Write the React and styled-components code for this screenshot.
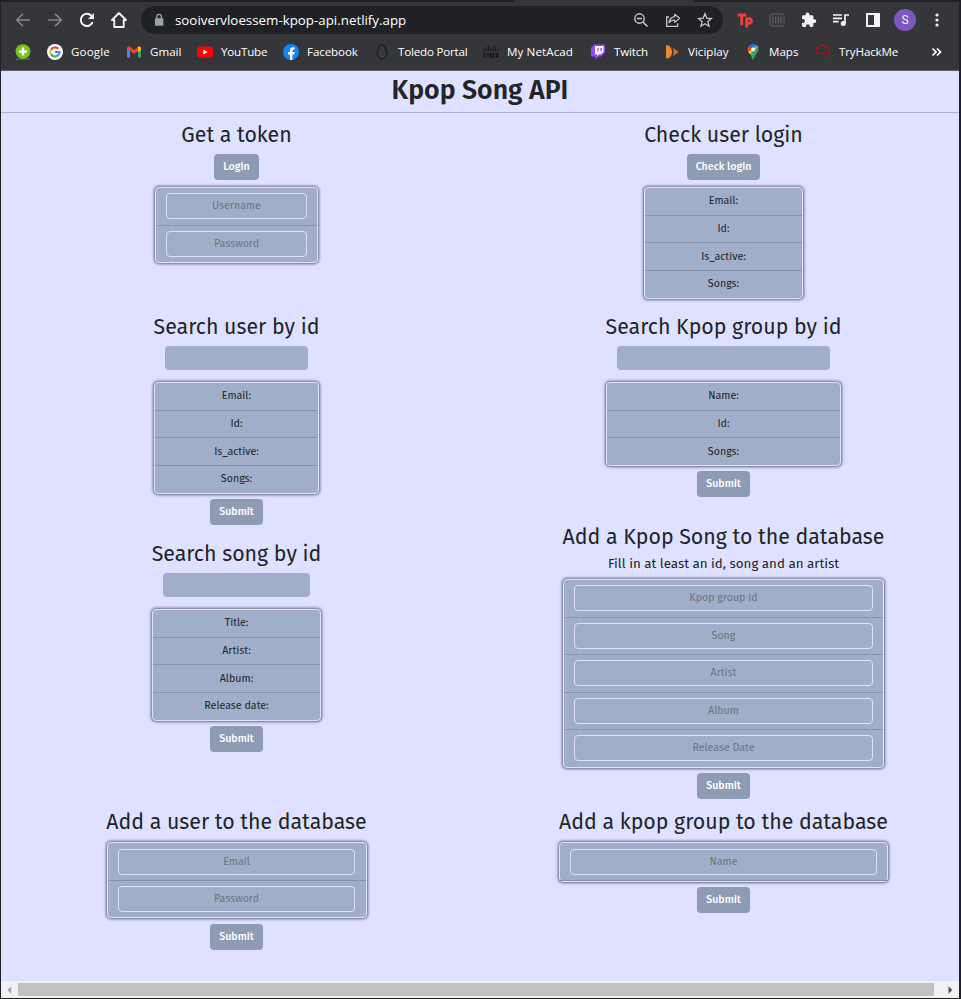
import React from "react";
import styled, { createGlobalStyle } from "styled-components";

const Global = createGlobalStyle`
  *, *::before, *::after { box-sizing: border-box; }
  body { margin: 0; background: #1f1d24; }
  button, input { font: inherit; }
`;

const Window = styled.div`
  width: 961px;
  height: 999px;
  padding: 0 2px 1px 1px;
  display: flex;
  flex-direction: column;
  overflow: hidden;
  background: #211f28;
`;

/* Browser chrome */
const Chrome = styled.header`
  flex: none;
  height: 71px;
  background: #35363a;
  border-bottom: 1px solid #5c5d61;
  font-family: "Open Sans", "Noto Sans", sans-serif;
  color: #fff;
`;

const TabStrip = styled.div`
  display: flex;
  justify-content: space-between;
  height: 2px;
`;

const TabEdge = styled.div`
  width: ${(p) => p.$width}px;
  background: #202124;
  border-radius: ${(p) => (p.$right ? "0 0 0 2px" : "0 0 2px 0")};
`;

const Toolbar = styled.div`
  display: flex;
  align-items: center;
  height: 36px;
`;

const Slot = styled.span`
  flex: none;
  display: flex;
  align-items: center;
  justify-content: center;
  width: ${(p) => p.$width || 32}px;
  color: ${(p) => p.$color || "#f1f3f4"};
`;

const NavGroup = styled.nav`
  display: flex;
  width: 140px;
  padding-left: 6px;
`;

const AddressBar = styled.div`
  display: flex;
  align-items: center;
  width: 582px;
  height: 28px;
  padding: 0 2px 0 8px;
  border-radius: 14px;
  background: #202124;
`;

const Url = styled.span`
  flex: 1;
  font-size: 13.33px;
  line-height: 20px;
  white-space: nowrap;
`;

const Extensions = styled.div`
  display: flex;
  align-items: center;
  padding-left: 6px;
`;

const Avatar = styled.span`
  display: flex;
  align-items: center;
  justify-content: center;
  width: 22px;
  height: 22px;
  border-radius: 50%;
  background: #7e57c2;
  font: 12px Roboto, sans-serif;
`;

const Bookmarks = styled.nav`
  display: flex;
  align-items: center;
  height: 28px;
  padding-left: 14px;
  font-size: 11.6px;
`;

const Bookmark = styled.a`
  flex: none;
  display: flex;
  align-items: center;
  gap: 8px;
  width: ${(p) => p.$width}px;
  white-space: nowrap;
  letter-spacing: ${(p) => p.$spacing || 0}px;

  svg { flex: none; }
`;

const BookmarkLabel = styled.span`
  padding-bottom: 2px;
`;

/* Page */
const Page = styled.main`
  flex: 1;
  min-height: 0;
  overflow: hidden;
  background: #dee1ff;
  color: #212529;
  font: 10.67px/16px "Fira Sans", "Open Sans", sans-serif;
`;

const PageTitle = styled.h1`
  margin: 0;
  height: 42px;
  padding-top: 3px;
  border-bottom: 1px solid #b0b2cb;
  text-align: center;
  font-size: 26.67px;
  line-height: 32px;
  font-weight: 600;
`;

const Columns = styled.div`
  display: grid;
  grid-template-columns: 487px 487px;
  margin: 0 -8px;
  padding-top: 8px;
`;

const Section = styled.section`
  display: flex;
  flex-direction: column;
  align-items: center;
  height: ${(p) => p.$height}px;
`;

const SectionTitle = styled.h2`
  margin: 0 0 5px;
  font-size: 21.33px;
  line-height: 28px;
  font-weight: 400;
  white-space: nowrap;
`;

const Hint = styled.p`
  margin: 0 0 7px;
  font-size: 13.33px;
  line-height: 16px;
`;

const Button = styled.button`
  flex: none;
  height: 26px;
  padding: 0 9px 0.4px;
  border: 0;
  border-radius: 4px;
  background: #8f9bb3;
  color: #fff;
  font-weight: 500;
  line-height: 16px;
`;

const SearchInput = styled.input`
  width: ${(p) => p.$width}px;
  height: 24px;
  margin-bottom: 12px;
  border: 0;
  border-radius: 4px;
  background: #a1aec9;
  text-align: center;
`;

const List = styled.ul`
  list-style: none;
  width: ${(p) => p.$width}px;
  margin: ${(p) => p.$top || 0}px 0 5.4px;
  padding: 0;
  border: 1px solid #dfe2ff;
  border-radius: 4px;
  background: #a1aec9;
  box-shadow: 0 0 3px 1px #66667a;
`;

const Item = styled.li`
  padding: ${(p) => (p.$field ? "5.25px 10.4px" : "5.33px 10px")};
  border-bottom: 1px solid #8593ad;
  text-align: center;

  &:last-child { border-bottom-width: ${(p) => (p.$closed ? 1 : 0)}px; }
`;

const Field = styled.input`
  display: block;
  width: 100%;
  height: 26px;
  padding: 0 8px 1px;
  border: 1px solid #dee1ff;
  border-radius: 4px;
  background: transparent;
  text-align: center;

  &::placeholder { color: #6c757d; opacity: 1; }
`;

/* Scrollbar */
const Scrollbar = styled.div`
  flex: none;
  display: flex;
  align-items: center;
  height: 17px;
  background: #f1f1f1;
`;

const Thumb = styled.div`
  flex: 1;
  height: 13px;
  background: #c1c1c1;
`;

const Icon = ({ size = 16, children, ...rest }) => (
  <svg width={size} height={size} viewBox="0 0 16 16" fill="none" {...rest}>{children}</svg>
);

const line = { stroke: "currentColor", strokeWidth: 1.6 };

const Back = () => <Icon><path d="M15 8H2M8 1.8 1.8 8 8 14.2" {...line} /></Icon>;
const Forward = () => <Icon><path d="M1 8h13M8 1.8 14.2 8 8 14.2" {...line} /></Icon>;
const Reload = () => (
  <Icon><path d="M13.6 10.2A6.1 6.1 0 1 1 12.4 3.8" stroke="currentColor" strokeWidth="2" /><path d="M15 1v6H9z" fill="currentColor" /></Icon>
);
const Home = () => (
  <Icon size={18}><path d="M8 1.8 1.8 8h2v6.2h8.4V8h2z" stroke="currentColor" strokeWidth="1.7" strokeLinejoin="round" /></Icon>
);
const Lock = () => (
  <Icon size={14}><rect x="3.4" y="6" width="9.6" height="8.6" rx="1" fill="currentColor" /><path d="M5.5 6.5V4.2a2.6 2.6 0 0 1 5.3 0v2.3" {...line} /></Icon>
);
const ZoomOut = () => (
  <Icon><circle cx="6.5" cy="6.5" r="4.7" stroke="currentColor" strokeWidth="1.4" /><path d="M4 6.5h5M10 10l4.5 4.5" {...line} /></Icon>
);
const Share = () => (
  <Icon><path d="M4 5H1.7v9.3h11v-3" stroke="currentColor" strokeWidth="1.3" /><path d="M9.7 2.2 14.6 6.3 9.7 10.4V8C7 8 5.2 8.8 4 10.8c.4-3.2 2.4-5.7 5.7-6.2z" stroke="currentColor" strokeWidth="1.2" strokeLinejoin="round" /></Icon>
);
const Star = () => (
  <Icon><path d="m8 1.8 1.8 4.3 4.7.4-3.6 3.1 1.1 4.6L8 11.8l-4 2.4 1.1-4.6-3.6-3.1 4.7-.4z" stroke="currentColor" strokeWidth="1.3" /></Icon>
);
const Tp = () => (
  <Icon><path d="M.5 3h8.800M4.700 3v10.300M9.700 5.200v10.300M10.400 6.600h1.800q2.200 0 2.200 2.300t-2.200 2.400h-1.800" stroke="#f03d3d" strokeWidth="2.900" /></Icon>
);
const Barcode = () => (
  <Icon><rect x="1" y="2" width="14" height="12" rx="1.5" stroke="#626367" /><path d="M4 4.500v7M6.700 4.500v7M9.300 4.500v7M12 4.500v7" stroke="#6a6b6f" strokeWidth="1.100" /></Icon>
);
const Puzzle = () => (
  <Icon><path fill="currentColor" d="M13.4 7.2h-1V4.6c0-.8-.6-1.4-1.4-1.4H8.4v-.9a1.9 1.9 0 0 0-3.8 0v.9H2.4C1.6 3.2 1 3.8 1 4.6v2.5h.9a1.9 1.9 0 0 1 0 3.9H1v2.6c0 .8.6 1.4 1.4 1.4h2.5v-.9a1.9 1.9 0 0 1 3.9 0v.9H11c.8 0 1.4-.6 1.4-1.4V11h1a1.9 1.9 0 0 0 0-3.8z" /></Icon>
);
const Queue = () => (
  <Icon><path d="M0 3h9M0 6.3h9M0 9.6h5.5M12 11.5V3h4" stroke="currentColor" strokeWidth="1.7" /><circle cx="10.2" cy="11.6" r="2.5" fill="currentColor" /></Icon>
);
const SidePanel = () => (
  <Icon><path fill="currentColor" fillRule="evenodd" d="M1 1h14v14H1zM3 3v10h6V3z" /></Icon>
);
const Dots = () => (
  <Icon><circle cx="8" cy="3" r="1.6" fill="currentColor" /><circle cx="8" cy="8" r="1.6" fill="currentColor" /><circle cx="8" cy="13" r="1.6" fill="currentColor" /></Icon>
);

const Plus = () => (
  <Icon><path d="M1 14h14v2H1z" fill="#55585a" /><circle cx="8" cy="7.6" r="7.4" fill="#7ac31f" /><path d="M8 3.6v8M4 7.6h8" stroke="#fff" strokeWidth="2.4" /></Icon>
);
const Google = () => (
  <Icon>
    <circle cx="8" cy="8" r="8" fill="#fff" />
    <path d="M4 5.7A4.6 4.6 0 0 1 11.3 4.8" stroke="#ea4335" strokeWidth="2.1" />
    <path d="M4 5.6a4.6 4.6 0 0 0 0 4.8" stroke="#fbbc05" strokeWidth="2.1" />
    <path d="M4 10.3a4.6 4.6 0 0 0 7 1" stroke="#34a853" strokeWidth="2.1" />
    <path d="M8 8h4.6a4.6 4.6 0 0 1-1.6 3.4" stroke="#4285f4" strokeWidth="2.1" />
  </Icon>
);
const Gmail = () => (
  <Icon>
    <path d="M1 4v9.5h3V6z" fill="#4285f4" /><path d="M15 4v9.5h-3V6z" fill="#34a853" />
    <path d="M1 4.4C1 2.6 3 2 4.2 3L8 6l3.8-3C13 2 15 2.6 15 4.4L8 10z" fill="#ea4335" />
    <path d="M12 3c1.2-1 3-.3 3 1.4V6l-3 2.2z" fill="#fbbc04" />
  </Icon>
);
const YouTube = () => (
  <Icon><rect y="2.4" width="16" height="11.4" rx="3" fill="#f00" /><path d="m6.3 5.6 4.3 2.5-4.3 2.5z" fill="#fff" /></Icon>
);
const Facebook = () => (
  <Icon><circle cx="8" cy="8" r="8" fill="#1385f5" /><path d="M7 16v-5.6H5V8.1h2V6.4c0-2 1.2-3.1 3-3.1l1.7.1v2h-1c-1 0-1.3.6-1.3 1.2v1.5h2.2l-.4 2.3H9.4V16z" fill="#fff" /></Icon>
);
const Toledo = () => (
  <Icon>
    <ellipse cx="8" cy="8" rx="4.700" ry="7.400" fill="#2a2b2e" stroke="#1f2022" strokeWidth="1.100" />
    <path d="M8 3C5.500 6 5.500 9.500 6.200 12.500h3.600C10.500 9.500 10.500 6 8 3z" stroke="#505155" strokeWidth=".8" />
    <path d="M8 6.500v5" stroke="#505155" />
  </Icon>
);
const Cisco = () => (
  <Icon>
    <path d="M1 4.500V7M3.300 3v4M5.700 1.500V7M8 4v3M10.300 1.500V7M12.700 3v4M15 4.500V7" stroke="#17181a" strokeWidth="1.100" />
    <path d="M3.300 9.800H1v3.400h2.300M5 9.300v4.400M9 9.800H7v1.700h2v1.700H7M12.200 9.800h-1.500v3.400h1.500M13.500 9.800h1.700v3.400h-1.700z" stroke="#17181a" strokeWidth="1.300" />
  </Icon>
);
const Twitch = () => (
  <Icon><path d="M4 .5h11v8L11 12.5H8.5L5.5 15.6v-3H1V3.7z" fill="#9146ff" /><path d="M5 2h8.5v6L11 10.2H8.7L7 12v-1.8H5z" fill="#fff" /><path d="M8 4v3.2M11 4v3.2" stroke="#9146ff" strokeWidth="1.3" /></Icon>
);
const Vici = () => (
  <Icon><path d="M2 1.300C6 1 8.300 4.500 8 8.500c-.2 3-2 5.500-4.500 6L2 14z" fill="#ee8a2b" /><path d="M9 3.800 14.500 8 9 12.200c1-2.700 1-5.500 0-8.400z" fill="#d8741f" /></Icon>
);
const MapPin = () => (
  <Icon>
    <path d="M8 0a5.4 5.4 0 0 0-4.2 2L8 5.6 11.2.9A5.4 5.4 0 0 0 8 0z" fill="#1a73e8" />
    <path d="M3.8 2a5.4 5.4 0 0 0-.6 6L8 5.6z" fill="#ea4335" />
    <path d="M11.2.9 3.2 8l2 2.5 8-6.7A5.4 5.4 0 0 0 11.2.9z" fill="#fbbc04" />
    <path d="M11.2.9 8 4.8l4.9-2A5.4 5.4 0 0 0 11.2.9z" fill="#4285f4" />
    <path d="M12.9 3 5 10.2C7 12.5 7.3 16 8 16s1-3.2 3.2-6c1.7-2 2.8-4.2 1.7-7z" fill="#34a853" />
    <circle cx="8" cy="5.4" r="1.9" fill="#fff" />
  </Icon>
);
const HackCloud = () => (
  <Icon>
    <path d="M8 9H3A2.700 2.700 0 0 1 3 3.700C4 0 9 0 10 3c2.500-.6 4 1 3.500 3.200" stroke="#a8161d" strokeWidth="1.200" />
    <path d="M9 8.500h6.500M8 11h3M12.500 11h3M9 13.300h2M12 15.300h3.500" stroke="#a8161d" strokeWidth="1.100" strokeDasharray="2.500 .7" />
  </Icon>
);
const More = () => (
  <Icon><path d="m3.500 4.500 3.500 3.500-3.500 3.500M8 4.500 11.500 8 8 11.500" stroke="#fff" strokeWidth="1.700" /></Icon>
);

const bookmarks = [
  [Plus, "", 32],
  [Google, "Google", 79, 0.15],
  [Gmail, "Gmail", 71],
  [YouTube, "YouTube", 86, -0.2],
  [Facebook, "Facebook", 91, -0.1],
  [Toledo, "Toledo Portal", 109, -0.2],
  [Cisco, "My NetAcad", 107, 0.1],
  [Twitch, "Twitch", 74, -0.2],
  [Vici, "Viciplay", 81],
  [MapPin, "Maps", 70],
  [HackCloud, "TryHackMe", 114, -0.15],
];

const TextList = ({ width, rows, top }) => (
  <List $width={width} $top={top}>{rows.map((r) => <Item key={r}>{r}</Item>)}</List>
);

const FieldList = ({ width, rows, closed, top }) => (
  <List $width={width} $top={top}>
    {rows.map((r) => (
      <Item key={r} $field $closed={closed}><Field placeholder={r} /></Item>
    ))}
  </List>
);

export default function App() {
  return (
    <>
      <Global />
      <Window>
        <Chrome>
          <TabStrip><TabEdge $width={514} /><TabEdge $right $width={266} /></TabStrip>
          <Toolbar>
            <NavGroup>
              <Slot $color="#85878b"><Back /></Slot>
              <Slot $color="#85878b"><Forward /></Slot>
              <Slot><Reload /></Slot>
              <Slot><Home /></Slot>
            </NavGroup>
            <AddressBar>
              <Slot $width={19} $color="#9aa0a6"><Lock /></Slot>
              <Slot $width={7} />
              <Url>sooivervloessem-kpop-api.netlify.app</Url>
              <Slot $color="#c6c8cb"><ZoomOut /></Slot>
              <Slot $color="#c6c8cb"><Share /></Slot>
              <Slot $color="#c6c8cb"><Star /></Slot>
            </AddressBar>
            <Extensions>
              <Slot><Tp /></Slot>
              <Slot><Barcode /></Slot>
              <Slot><Puzzle /></Slot>
              <Slot><Queue /></Slot>
              <Slot><SidePanel /></Slot>
              <Slot><Avatar>S</Avatar></Slot>
              <Slot><Dots /></Slot>
            </Extensions>
          </Toolbar>
          <Bookmarks>
            {bookmarks.map(([Glyph, label, width, spacing]) => (
              <Bookmark key={width + label} $width={width} $spacing={spacing}>
                <Glyph /><BookmarkLabel>{label}</BookmarkLabel>
              </Bookmark>
            ))}
            <More />
          </Bookmarks>
        </Chrome>

        <Page>
          <PageTitle>Kpop Song API</PageTitle>
          <Columns>
            <div>
              <Section $height={192}>
                <SectionTitle>Get a token</SectionTitle>
                <Button>Login</Button>
                <FieldList top={7} width={163} rows={["Username", "Password"]} />
              </Section>
              <Section $height={227}>
                <SectionTitle>Search user by id</SectionTitle>
                <SearchInput $width={143} />
                <TextList width={165} rows={["Email:", "Id:", "Is_active:", "Songs:"]} />
                <Button>Submit</Button>
              </Section>
              <Section $height={268}>
                <SectionTitle>Search song by id</SectionTitle>
                <SearchInput $width={147} />
                <TextList width={169} rows={["Title:", "Artist:", "Album:", "Release date:"]} />
                <Button>Submit</Button>
              </Section>
              <Section>
                <SectionTitle>Add a user to the database</SectionTitle>
                <FieldList top={1.33} width={260} rows={["Email", "Password"]} />
                <Button>Submit</Button>
              </Section>
            </div>
            <div>
              <Section $height={192}>
                <SectionTitle>Check user login</SectionTitle>
                <Button>Check login</Button>
                <TextList top={7} width={159} rows={["Email:", "Id:", "Is_active:", "Songs:"]} />
              </Section>
              <Section $height={210}>
                <SectionTitle>Search Kpop group by id</SectionTitle>
                <SearchInput $width={213} />
                <TextList width={235} rows={["Name:", "Id:", "Songs:"]} />
                <Button>Submit</Button>
              </Section>
              <Section $height={285}>
                <SectionTitle>Add a Kpop Song to the database</SectionTitle>
                <Hint>Fill in at least an id, song and an artist</Hint>
                <FieldList width={321} rows={["Kpop group id", "Song", "Artist", "Album", "Release Date"]} />
                <Button>Submit</Button>
              </Section>
              <Section>
                <SectionTitle>Add a kpop group to the database</SectionTitle>
                <FieldList top={1.33} width={329} rows={["Name"]} closed />
                <Button>Submit</Button>
              </Section>
            </div>
          </Columns>
        </Page>

        <Scrollbar>
          <Slot $width={17} $color="#a3a3a3"><Icon size={12}><path d="M9.500 3v10L4.500 8z" fill="currentColor" /></Icon></Slot>
          <Thumb />
          <Slot $width={25} $color="#505050"><Icon size={12}><path d="M10 3v10l5-5z" fill="currentColor" /></Icon></Slot>
        </Scrollbar>
      </Window>
    </>
  );
}
